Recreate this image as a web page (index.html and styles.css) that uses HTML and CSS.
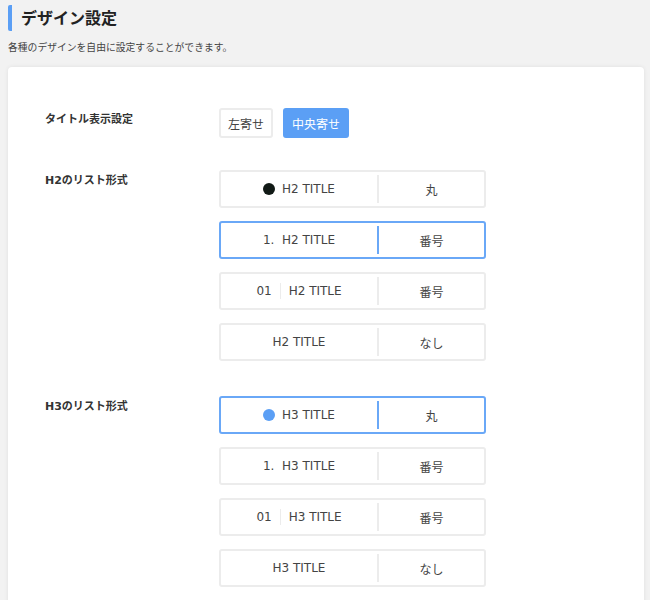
FILE: index.html
```html
<!DOCTYPE html>
<html lang="ja">
<head>
    <meta charset="UTF-8">
    <meta name="viewport" content="width=device-width, initial-scale=1.0">
    <title>デザイン設定</title>
    <link rel="stylesheet" href="styles.css">
</head>
<body>
    <div class="page-header">
        <h2>デザイン設定</h2>
        <p class="lead">各種のデザインを自由に設定することができます。</p>
    </div>

    <div class="card">
        <div class="setting-row row-align">
            <div class="setting-label">タイトル表示設定</div>
            <div class="setting-body buttons">
                <button class="btn">左寄せ</button>
                <button class="btn active">中央寄せ</button>
            </div>
        </div>

        <div class="setting-row">
            <div class="setting-label list-label">H2のリスト形式</div>
            <div class="setting-body options">
                <div class="option">
                    <div class="option-preview"><span class="dot"></span>H2 TITLE</div>
                    <div class="option-name">丸</div>
                </div>
                <div class="option selected">
                    <div class="option-preview">1.&nbsp; H2 TITLE</div>
                    <div class="option-name">番号</div>
                </div>
                <div class="option">
                    <div class="option-preview"><span class="num">01</span>H2 TITLE</div>
                    <div class="option-name">番号</div>
                </div>
                <div class="option">
                    <div class="option-preview">H2 TITLE</div>
                    <div class="option-name">なし</div>
                </div>
            </div>
        </div>

        <div class="setting-row">
            <div class="setting-label list-label">H3のリスト形式</div>
            <div class="setting-body options">
                <div class="option selected">
                    <div class="option-preview"><span class="dot blue"></span>H3 TITLE</div>
                    <div class="option-name">丸</div>
                </div>
                <div class="option">
                    <div class="option-preview">1.&nbsp; H3 TITLE</div>
                    <div class="option-name">番号</div>
                </div>
                <div class="option">
                    <div class="option-preview"><span class="num">01</span>H3 TITLE</div>
                    <div class="option-name">番号</div>
                </div>
                <div class="option">
                    <div class="option-preview">H3 TITLE</div>
                    <div class="option-name">なし</div>
                </div>
            </div>
        </div>
    </div>
</body>
</html>
```

FILE: styles.css
```css
* {
    margin: 0;
    padding: 0;
    box-sizing: border-box;
}

body {
    font-family: "DejaVu Sans", "Noto Sans CJK JP", sans-serif;
    background: #f2f2f2;
    color: #444;
    padding: 5px 6px 0 8px;
}

.page-header h2 {
    font-family: "Noto Sans", "Noto Sans CJK JP", sans-serif;
    font-size: 16px;
    font-weight: 700;
    color: #222;
    line-height: 26px;
    height: 26px;
    padding-left: 9px;
    border-left: 4px solid #5b9ff5;
    border-radius: 2px;
}

.lead {
    font-size: 9.8px;
    color: #444;
    margin-top: 9px;
    line-height: 16px;
}

.card {
    margin-top: 11px;
    background: #fff;
    border-radius: 4px;
    box-shadow: 0 0 4px rgba(0, 0, 0, 0.08);
    padding: 41px 37px 40px;
    min-height: 600px;
}

.setting-row {
    display: flex;
    margin-bottom: 32px;
}

.setting-row + .setting-row + .setting-row {
    margin-top: 35px;
}

.setting-label {
    width: 174px;
    flex-shrink: 0;
    font-size: 11px;
    font-weight: 700;
    color: #333;
}

.row-align .setting-label {
    padding-top: 2px;
}

.list-label {
    padding-top: 1px;
}

.buttons {
    display: flex;
    gap: 10px;
}

.btn {
    font-family: inherit;
    font-size: 12px;
    color: #444;
    background: #fff;
    border: 2px solid #ececec;
    border-radius: 3px;
    height: 30px;
    padding: 0 7px;
    cursor: pointer;
}

.btn.active {
    background: #5b9ff5;
    border-color: #5b9ff5;
    color: #fff;
}

.options {
    display: flex;
    flex-direction: column;
    gap: 13px;
}

.option {
    width: 267px;
    height: 38px;
    display: flex;
    align-items: center;
    border: 2px solid #ececec;
    border-radius: 3px;
    font-size: 12px;
    color: #444;
}

.option.selected {
    border-color: #6aa8f7;
}

.option-preview {
    width: 158px;
    height: 28px;
    display: flex;
    align-items: center;
    justify-content: center;
    border-right: 2px solid #ececec;
}

.option.selected .option-preview {
    border-right-color: #6aa8f7;
}

.option-name {
    flex: 1;
    text-align: center;
}

.dot {
    width: 12px;
    height: 12px;
    border-radius: 50%;
    background: #111a16;
    margin-right: 7px;
}

.dot.blue {
    background: #5b9ff5;
}

.num {
    padding-right: 8px;
    margin-right: 8px;
    border-right: 1px solid #ececec;
    line-height: 16px;
}
```
